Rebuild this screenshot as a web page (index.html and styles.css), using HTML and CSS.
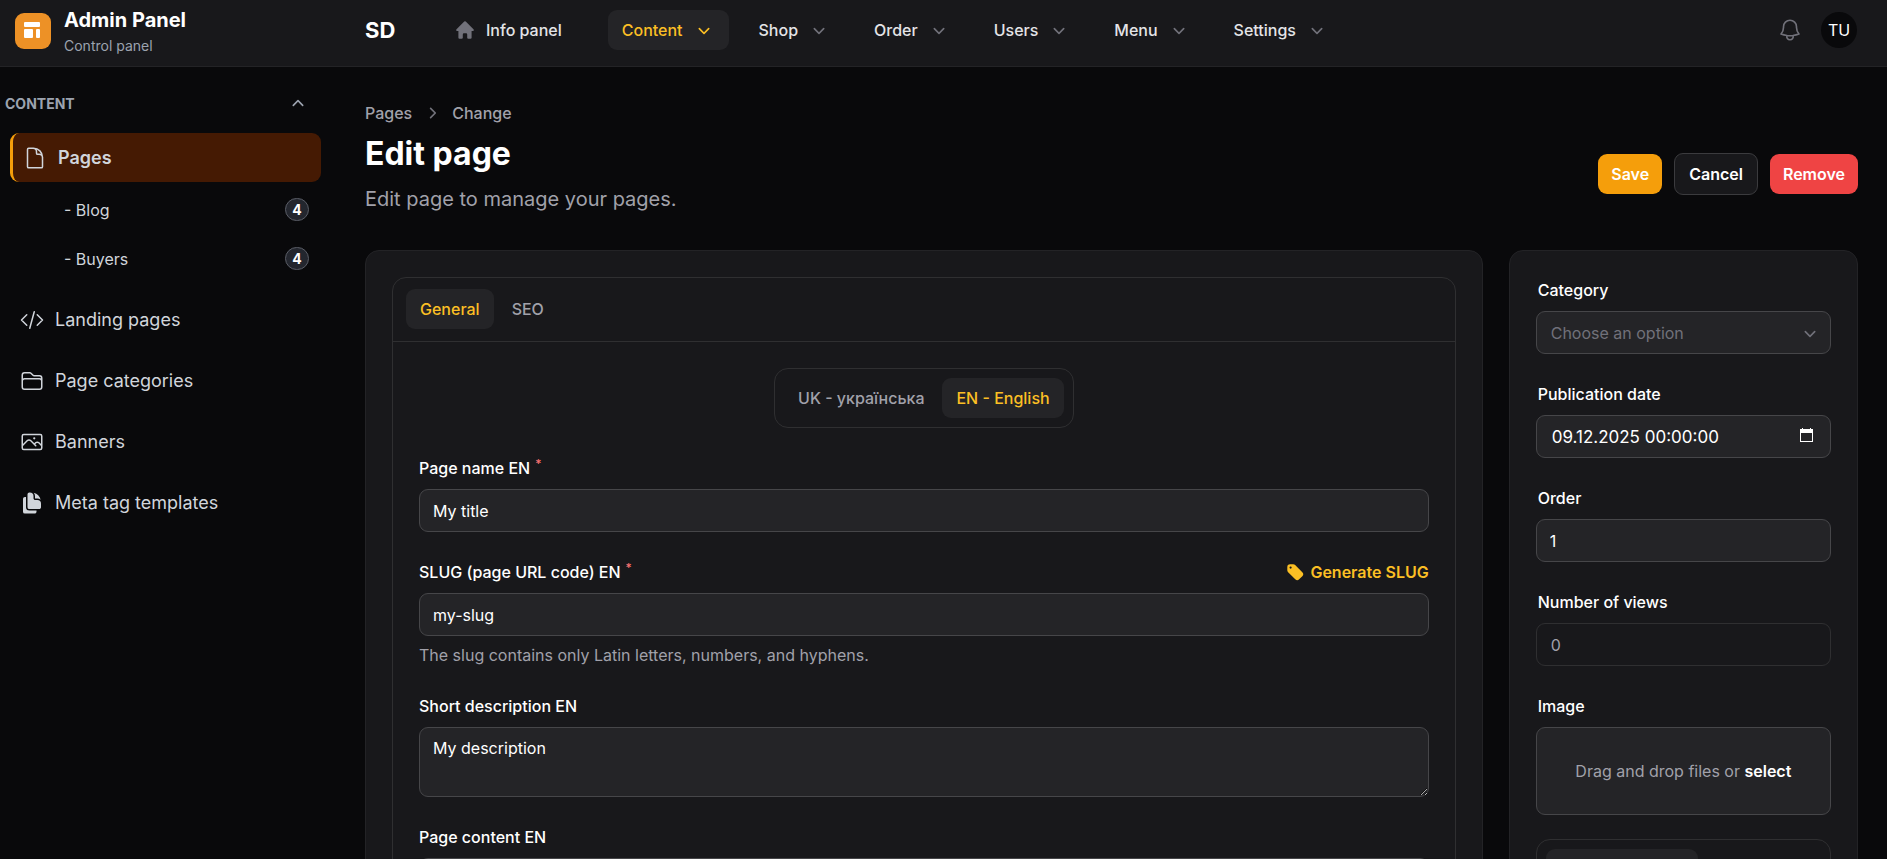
FILE: index.html
```html
<!DOCTYPE html>
<html lang="en">
<head>
    <meta charset="UTF-8">
    <meta name="viewport" content="width=device-width, initial-scale=1.0">
    <title>Edit page - Admin Panel</title>
    <link rel="stylesheet" href="styles.css">
</head>
<body>
    <!-- shared icons -->
    <svg class="sprite" aria-hidden="true">
        <symbol id="i-chevron" viewBox="0 0 20 20">
            <path fill="currentColor" d="M5.22 8.22a.75.75 0 0 1 1.06 0L10 11.94l3.72-3.72a.75.75 0 1 1 1.06 1.06l-4.25 4.25a.75.75 0 0 1-1.06 0L5.22 9.28a.75.75 0 0 1 0-1.06Z"/>
        </symbol>
    </svg>

    <header class="topbar">
        <a href="#" class="brand">
            <svg class="brand-logo" viewBox="0 0 36 36">
                <rect width="36" height="36" rx="9" fill="#ed9126"/>
                <rect x="9" y="9" width="16" height="5" rx="1" fill="#fff"/>
                <rect x="9" y="16" width="9" height="9" rx="1" fill="#fff"/>
                <rect x="21" y="16" width="4" height="9" rx="1" fill="#fff"/>
            </svg>
            <span class="brand-text">
                <span class="brand-name">Admin Panel</span>
                <span class="brand-sub">Control panel</span>
            </span>
        </a>

        <a href="#" class="site-name">SD</a>

        <nav class="topnav">
            <a href="#" class="topnav-item topnav-home">
                <svg class="icon" viewBox="0 0 20 20"><path fill="currentColor" fill-rule="evenodd" d="M9.293 2.293a1 1 0 0 1 1.414 0l7 7A1 1 0 0 1 17 11h-1v6a1 1 0 0 1-1 1h-2a1 1 0 0 1-1-1v-3a1 1 0 0 0-1-1H9a1 1 0 0 0-1 1v3a1 1 0 0 1-1 1H5a1 1 0 0 1-1-1v-6H3a1 1 0 0 1-.707-1.707l7-7Z"/></svg>
                Info panel
            </a>
            <button type="button" class="topnav-item active">Content <svg class="icon"><use href="#i-chevron"/></svg></button>
            <button type="button" class="topnav-item">Shop <svg class="icon"><use href="#i-chevron"/></svg></button>
            <button type="button" class="topnav-item">Order <svg class="icon"><use href="#i-chevron"/></svg></button>
            <button type="button" class="topnav-item">Users <svg class="icon"><use href="#i-chevron"/></svg></button>
            <button type="button" class="topnav-item">Menu <svg class="icon"><use href="#i-chevron"/></svg></button>
            <button type="button" class="topnav-item">Settings <svg class="icon"><use href="#i-chevron"/></svg></button>
        </nav>

        <div class="topbar-end">
            <button type="button" class="bell" aria-label="Notifications">
                <svg viewBox="0 0 24 24"><path d="M14.857 17.082a23.848 23.848 0 0 0 5.454-1.31A8.967 8.967 0 0 1 18 9.75V9A6 6 0 0 0 6 9v.75a8.967 8.967 0 0 1-2.312 6.022c1.733.64 3.56 1.085 5.455 1.31m5.714 0a24.255 24.255 0 0 1-5.714 0m5.714 0a3 3 0 1 1-5.714 0"/></svg>
            </button>
            <button type="button" class="avatar">TU</button>
        </div>
    </header>

    <div class="layout">
        <aside class="sidebar">
            <button type="button" class="group-title">
                CONTENT
                <svg class="icon"><use href="#i-chevron"/></svg>
            </button>
            <ul class="menu">
                <li>
                    <a href="#" class="menu-item active">
                        <svg viewBox="0 0 24 24"><path d="M19.5 14.25v-2.625a3.375 3.375 0 0 0-3.375-3.375h-1.5A1.125 1.125 0 0 1 13.5 7.125v-1.5a3.375 3.375 0 0 0-3.375-3.375H8.25m2.25 0H5.625c-.621 0-1.125.504-1.125 1.125v17.25c0 .621.504 1.125 1.125 1.125h12.75c.621 0 1.125-.504 1.125-1.125V11.25a9 9 0 0 0-9-9Z"/></svg>
                        Pages
                    </a>
                    <ul class="submenu">
                        <li><a href="#">- Blog <span class="count">4</span></a></li>
                        <li><a href="#">- Buyers <span class="count">4</span></a></li>
                    </ul>
                </li>
                <li>
                    <a href="#" class="menu-item">
                        <svg viewBox="0 0 24 24"><path d="M17.25 6.75 22.5 12l-5.25 5.25m-10.5 0L1.5 12l5.25-5.25m7.5-3-4.5 16.5"/></svg>
                        Landing pages
                    </a>
                </li>
                <li>
                    <a href="#" class="menu-item">
                        <svg viewBox="0 0 24 24"><path d="M2.25 12.75V12A2.25 2.25 0 0 1 4.5 9.75h15A2.25 2.25 0 0 1 21.75 12v.75m-8.69-6.44-2.12-2.12a1.5 1.5 0 0 0-1.061-.44H4.5A2.25 2.25 0 0 0 2.25 6v12a2.25 2.25 0 0 0 2.25 2.25h15A2.25 2.25 0 0 0 21.75 18V9a2.25 2.25 0 0 0-2.25-2.25h-5.379a1.5 1.5 0 0 1-1.06-.44Z"/></svg>
                        Page categories
                    </a>
                </li>
                <li>
                    <a href="#" class="menu-item">
                        <svg viewBox="0 0 24 24"><path d="m2.25 15.75 5.159-5.159a2.25 2.25 0 0 1 3.182 0l5.159 5.159m-1.5-1.5 1.409-1.409a2.25 2.25 0 0 1 3.182 0l2.909 2.909m-18 3.75h16.5a1.5 1.5 0 0 0 1.5-1.5V6a1.5 1.5 0 0 0-1.5-1.5H3.75A1.5 1.5 0 0 0 2.25 6v12a1.5 1.5 0 0 0 1.5 1.5Zm10.5-11.25h.008v.008h-.008V8.25Zm.375 0a.375.375 0 1 1-.75 0 .375.375 0 0 1 .75 0Z"/></svg>
                        Banners
                    </a>
                </li>
                <li>
                    <a href="#" class="menu-item">
                        <svg class="solid" viewBox="0 0 24 24"><path d="M7.5 3.375c0-1.036.84-1.875 1.875-1.875h.375a3.75 3.75 0 0 1 3.75 3.75v1.875C13.5 8.161 14.34 9 15.375 9h1.875A3.75 3.75 0 0 1 21 12.75v3.375C21 17.16 20.16 18 19.125 18h-9.75A1.875 1.875 0 0 1 7.5 16.125V3.375Z"/><path d="M15 5.25a5.23 5.23 0 0 0-1.279-3.434 9.768 9.768 0 0 1 6.963 6.963A5.23 5.23 0 0 0 17.25 7.5h-1.875A.375.375 0 0 1 15 7.125V5.25ZM4.875 6H6v10.125A3.375 3.375 0 0 0 9.375 19.5H16.5v1.125c0 1.035-.84 1.875-1.875 1.875h-9.75A1.875 1.875 0 0 1 3 20.625V7.875C3 6.839 3.84 6 4.875 6Z"/></svg>
                        Meta tag templates
                    </a>
                </li>
            </ul>
        </aside>

        <main class="main">
            <div class="page-header">
                <div>
                    <nav class="breadcrumbs">
                        <a href="#">Pages</a>
                        <svg class="icon"><use href="#i-chevron"/></svg>
                        <span>Change</span>
                    </nav>
                    <h1>Edit page</h1>
                    <p class="subheading">Edit page to manage your pages.</p>
                </div>
                <div class="actions">
                    <button type="submit" form="page-form" class="btn btn-primary">Save</button>
                    <button type="button" class="btn btn-gray">Cancel</button>
                    <button type="button" class="btn btn-danger">Remove</button>
                </div>
            </div>

            <form class="form-grid" id="page-form">
                <section class="card">
                    <div class="tabs-box">
                        <div class="tabs">
                            <button type="button" class="tab active">General</button>
                            <button type="button" class="tab">SEO</button>
                        </div>
                        <div class="tab-content">
                            <div class="lang-tabs">
                                <button type="button" class="tab">UK - українська</button>
                                <button type="button" class="tab active">EN - English</button>
                            </div>

                            <div class="field">
                                <label for="name">Page name EN<sup>*</sup></label>
                                <input type="text" id="name" value="My title">
                            </div>

                            <div class="field">
                                <div class="label-row">
                                    <label for="slug">SLUG (page URL code) EN<sup>*</sup></label>
                                    <button type="button" class="hint-action">
                                        <svg class="icon" viewBox="0 0 20 20"><path fill="currentColor" fill-rule="evenodd" d="M5.5 3A2.5 2.5 0 0 0 3 5.5v2.879a2.5 2.5 0 0 0 .732 1.767l6.5 6.5a2.5 2.5 0 0 0 3.536 0l2.878-2.878a2.5 2.5 0 0 0 0-3.536l-6.5-6.5A2.5 2.5 0 0 0 8.38 3H5.5ZM6 7a1 1 0 1 0 0-2 1 1 0 0 0 0 2Z"/></svg>
                                        Generate SLUG
                                    </button>
                                </div>
                                <input type="text" id="slug" value="my-slug">
                                <p class="helper">The slug contains only Latin letters, numbers, and hyphens.</p>
                            </div>

                            <div class="field">
                                <label for="short">Short description EN</label>
                                <textarea id="short">My description</textarea>
                            </div>

                            <div class="field">
                                <label for="content">Page content EN</label>
                                <textarea id="content"></textarea>
                            </div>
                        </div>
                    </div>
                </section>

                <section class="card side">
                    <div class="field">
                        <label for="category">Category</label>
                        <div class="select-wrap">
                            <select id="category">
                                <option>Choose an option</option>
                            </select>
                            <svg class="icon"><use href="#i-chevron"/></svg>
                        </div>
                    </div>
                    <div class="field">
                        <label for="date">Publication date</label>
                        <div class="date-wrap">
                            <input type="text" id="date" value="09.12.2025 00:00:00">
                            <svg class="calendar" viewBox="0 0 13 15"><path fill="currentColor" fill-rule="evenodd" d="M2 0h1v1h7V0h1v1h2v13H0V1h2V0ZM1 5v8h11V5H1Z"/></svg>
                        </div>
                    </div>
                    <div class="field">
                        <label for="order">Order</label>
                        <input type="text" id="order" value="1">
                    </div>
                    <div class="field">
                        <label for="views">Number of views</label>
                        <input type="text" id="views" value="0" disabled>
                    </div>
                    <div class="media">
                        <div class="field">
                            <label for="image">Image</label>
                            <label class="dropzone" for="image">Drag and drop files or <b>select</b></label>
                            <input type="file" id="image" class="file-input">
                        </div>
                        <div class="side-tabs">
                            <button type="button" class="tab active" aria-label="Image language"></button>
                        </div>
                    </div>
                </section>
            </form>
        </main>
    </div>
</body>
</html>
```
FILE: styles.css
```css
:root {
    --bg: #09090b;
    --surface: #18181b;
    --field: #242427;
    --line: #2f2f31;
    --line-soft: #232326;
    --line-field: #464649;
    --muted: #a1a1aa;
    --dim: #71717a;
    --amber: #fbbf24;
}

* {
    box-sizing: border-box;
    margin: 0;
    padding: 0;
}

body {
    font-family: Inter, "Liberation Sans", sans-serif;
    font-size: 16px;
    line-height: 26px;
    height: 100vh;
    background: var(--bg);
    color: #fff;
    color-scheme: dark;
    overflow: hidden;
}

a {
    color: inherit;
    text-decoration: none;
}

ul {
    list-style: none;
}

button,
input,
select,
textarea {
    font: inherit;
    color: inherit;
    background: none;
    border: none;
}

button {
    cursor: pointer;
}

.sprite {
    display: none;
}

.icon {
    width: 22px;
    height: 22px;
    flex-shrink: 0;
}

/* Top bar */
.topbar {
    display: flex;
    align-items: flex-start;
    height: 67px;
    padding: 0 30px 0 15px;
    background: var(--surface);
    border-bottom: 1px solid var(--line-soft);
}

.brand {
    display: flex;
    gap: 13px;
    width: 350px;
}

.brand-logo {
    width: 36px;
    height: 36px;
    margin-top: 13px;
}

.brand-text {
    display: flex;
    flex-direction: column;
    padding-top: 6px;
}

.brand-name {
    font-size: 20px;
    font-weight: 700;
    line-height: 28px;
}

.brand-sub {
    font-size: 14px;
    line-height: 24px;
    color: #9ca3af;
}

.site-name {
    width: 75px;
    font-size: 22px;
    font-weight: 700;
    line-height: 60px;
}

.topnav {
    display: flex;
    gap: 16px;
    padding-top: 10px;
}

.topnav-item {
    display: flex;
    align-items: center;
    gap: 10px;
    height: 40px;
    padding: 0 14px;
    border-radius: 9px;
    font-weight: 500;
    color: #e4e4e7;
}

.topnav-item .icon {
    color: var(--dim);
}

.topnav-home {
    margin-right: 16px;
}

.topnav-item.active {
    background: var(--field);
}

.topnav-item.active,
.topnav-item.active .icon {
    color: var(--amber);
}

.topbar-end {
    display: flex;
    align-items: center;
    gap: 18px;
    height: 60px;
    margin-left: auto;
}

.bell {
    width: 26px;
    height: 26px;
}

.bell svg {
    display: block;
    fill: none;
    stroke: var(--dim);
    stroke-width: 1.5;
    stroke-linecap: round;
    stroke-linejoin: round;
}

.avatar {
    width: 36px;
    height: 36px;
    border-radius: 50%;
    background: var(--bg);
}

/* Layout */
.layout {
    display: flex;
}

.sidebar {
    width: 335px;
    flex-shrink: 0;
    padding: 24px 14px 0 0;
}

.main {
    flex: 1;
    min-width: 0;
    padding: 33px 29px 0 30px;
}

/* Sidebar */
.group-title {
    display: flex;
    align-items: center;
    justify-content: space-between;
    width: 100%;
    padding: 0 12px 0 5px;
    font-size: 14px;
    font-weight: 700;
    color: #9ca3af;
}

.group-title .icon {
    transform: rotate(180deg);
}

.menu {
    display: flex;
    flex-direction: column;
    gap: 12px;
    padding: 16px 0 0 10px;
}

.menu-item {
    display: flex;
    align-items: center;
    gap: 11px;
    height: 49px;
    padding: 0 10px;
    border-radius: 9px;
    font-size: 18px;
    color: #d1d5db;
}

.menu-item.active {
    background: #451a03;
    border-left: 3px solid #f59e0b;
    font-weight: 600;
}

.menu-item svg {
    width: 24px;
    height: 24px;
    fill: none;
    stroke: currentColor;
    stroke-width: 1.5;
    stroke-linecap: round;
    stroke-linejoin: round;
}

.menu-item svg.solid {
    fill: currentColor;
    stroke: none;
}

.submenu {
    padding: 3px 12px 0 54px;
}

.submenu a {
    display: flex;
    align-items: center;
    justify-content: space-between;
    height: 49px;
    color: #d1d5db;
}

.count {
    width: 24px;
    border: 1px solid #5a5d66;
    border-radius: 12px;
    background: #23262e;
    font-size: 14px;
    font-weight: 700;
    line-height: 21px;
    text-align: center;
    color: #fff;
}

/* Page header */
.page-header {
    display: flex;
    align-items: center;
    justify-content: space-between;
    margin-bottom: 35px;
}

.breadcrumbs {
    display: flex;
    align-items: center;
    gap: 9px;
    font-weight: 500;
    color: var(--muted);
}

.breadcrumbs .icon {
    color: var(--dim);
    transform: rotate(-90deg);
}

h1 {
    font-size: 32px;
    font-weight: 700;
    line-height: 40px;
    margin: 8px 0 9px;
}

.subheading {
    font-size: 20px;
    line-height: 32px;
    color: var(--muted);
}

.actions {
    display: flex;
    align-items: center;
    gap: 12px;
    padding-top: 33px;
}

.btn {
    padding: 7px 13px;
    border-radius: 9px;
    font-weight: 600;
}

.btn-primary {
    background: #f59e0b;
}

.btn-gray {
    padding: 7px 14px;
    background: var(--surface);
    border: 1px solid #3b3b3e;
}

.btn-danger {
    background: #ef4444;
}

/* Form */
.form-grid {
    display: grid;
    grid-template-columns: 16fr 5fr;
    gap: 26px;
}

.card {
    padding: 26px;
    background: var(--surface);
    border: 1px solid var(--line-soft);
    border-radius: 14px;
}

.tabs-box {
    border: 1px solid var(--line);
    border-radius: 14px;
}

.tabs {
    display: flex;
    gap: 4px;
    padding: 11px 13px 12px;
    border-bottom: 1px solid var(--line);
}

.tab {
    height: 40px;
    padding: 0 14px;
    border-radius: 9px;
    font-weight: 500;
    color: var(--muted);
}

.tab.active {
    background: var(--field);
    color: var(--amber);
}

.tab-content {
    display: flex;
    flex-direction: column;
    gap: 27px;
    padding: 26px;
}

.lang-tabs {
    display: flex;
    gap: 4px;
    align-self: center;
    padding: 9px;
    border: 1px solid var(--line);
    border-radius: 14px;
}

.side {
    display: flex;
    flex-direction: column;
    gap: 27px;
}

.field {
    display: flex;
    flex-direction: column;
    gap: 8px;
}

.field label {
    font-weight: 500;
}

.side .field > label:first-child {
    padding-left: 2px;
}

.field sup {
    margin-left: 5px;
    font-size: 12px;
    line-height: 0;
    color: #f87171;
}

.label-row {
    display: flex;
    justify-content: space-between;
}

.hint-action {
    display: flex;
    align-items: center;
    gap: 4px;
    font-weight: 600;
    color: var(--amber);
}

.field input,
.field textarea,
.field select,
.dropzone {
    width: 100%;
    background: var(--field);
    border: 1px solid var(--line-field);
    border-radius: 9px;
    padding: 0 13px;
}

.field input,
.field select {
    display: block;
    height: 43px;
}

.field textarea {
    display: block;
    height: 70px;
    padding: 7px 13px;
}

.field select {
    appearance: none;
    padding: 0 14px;
    color: var(--dim);
}

.field input:disabled {
    background: transparent;
    border-color: var(--line);
    color: var(--muted);
    padding: 0 14px;
}

.select-wrap,
.date-wrap {
    position: relative;
}

.select-wrap .icon {
    position: absolute;
    top: 11px;
    right: 10px;
    color: var(--dim);
}

.calendar {
    position: absolute;
    top: 13px;
    right: 18px;
    width: 13px;
    height: 15px;
}

.field .date-wrap input {
    padding: 0 15px;
    font-size: 17px;
}

.helper {
    line-height: 22px;
    color: var(--muted);
}

.field .dropzone {
    height: 88px;
    line-height: 86px;
    text-align: center;
    font-weight: 400;
    color: var(--muted);
}

.dropzone b {
    font-weight: 600;
    color: #fff;
}

.field .file-input {
    display: none;
}

.media {
    display: flex;
    flex-direction: column;
    gap: 24px;
}

.side-tabs {
    padding: 9px;
    border: 1px solid var(--line);
    border-radius: 14px;
}

.side-tabs .tab {
    width: 152px;
}
```
